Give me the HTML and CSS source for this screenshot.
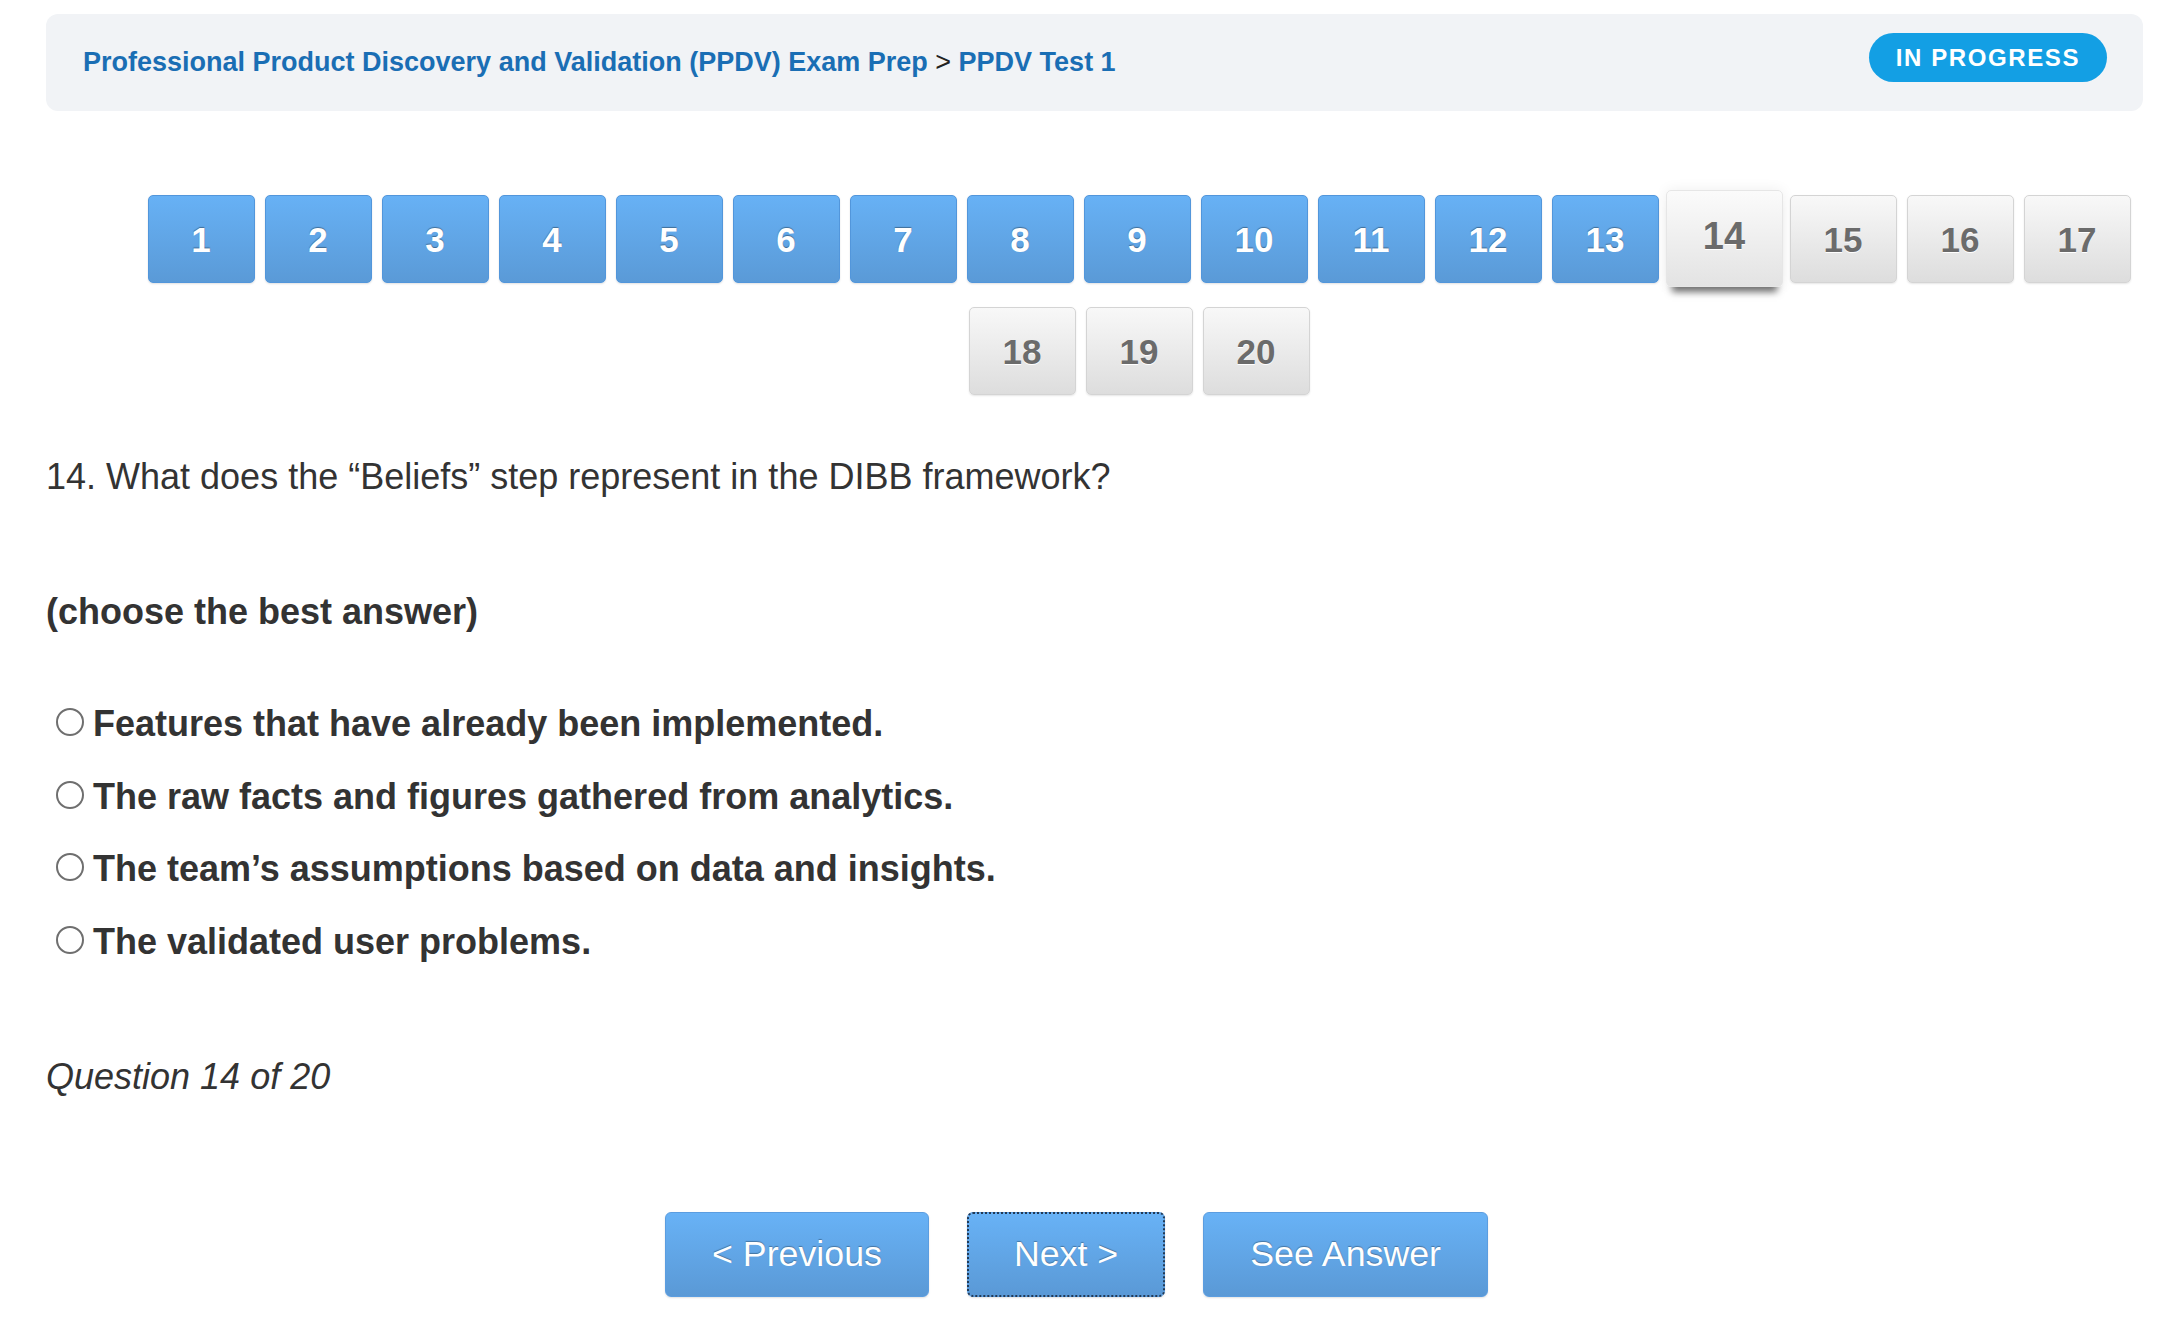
FILE: index.html
```html
<!DOCTYPE html>
<html lang="en">
<head>
<meta charset="utf-8">
<title>PPDV Test 1</title>
<link rel="stylesheet" href="styles.css">
</head>
<body>
<div class="page">
  <header class="topbar">
    <nav class="crumbs"><a class="crumb" href="#">Professional Product Discovery and Validation (PPDV) Exam Prep</a> <span class="sep">&gt;</span> <a class="crumb" href="#">PPDV Test 1</a></nav>
    <span class="badge">IN PROGRESS</span>
  </header>

  <div class="pager">
    <button class="pg done">1</button>
    <button class="pg done">2</button>
    <button class="pg done">3</button>
    <button class="pg done">4</button>
    <button class="pg done">5</button>
    <button class="pg done">6</button>
    <button class="pg done">7</button>
    <button class="pg done">8</button>
    <button class="pg done">9</button>
    <button class="pg done">10</button>
    <button class="pg done">11</button>
    <button class="pg done">12</button>
    <button class="pg done">13</button>
    <button class="pg todo current">14</button>
    <button class="pg todo">15</button>
    <button class="pg todo">16</button>
    <button class="pg todo">17</button>
    <button class="pg todo">18</button>
    <button class="pg todo">19</button>
    <button class="pg todo">20</button>
  </div>

  <p class="question">14. What does the “Beliefs” step represent in the DIBB framework?</p>
  <p class="hint">(choose the best answer)</p>

  <div class="options">
    <label class="option"><span class="radio"></span><span class="opt-text">Features that have already been implemented.</span></label>
    <label class="option"><span class="radio"></span><span class="opt-text">The raw facts and figures gathered from analytics.</span></label>
    <label class="option"><span class="radio"></span><span class="opt-text">The team’s assumptions based on data and insights.</span></label>
    <label class="option"><span class="radio"></span><span class="opt-text">The validated user problems.</span></label>
  </div>

  <p class="counter">Question 14 of 20</p>

  <div class="actions">
    <button class="act">&lt; Previous</button>
    <button class="act focused">Next &gt;</button>
    <button class="act">See Answer</button>
  </div>
</div>
</body>
</html>
```

FILE: styles.css
```css
html, body {
  margin: 0;
  padding: 0;
  background: #ffffff;
}

body {
  font-family: "Liberation Sans", Arial, Helvetica, sans-serif;
  color: #333333;
}

.page {
  padding: 14px 14px 40px 46px;
}

/* Header */
.topbar {
  height: 97px;
  box-sizing: border-box;
  background: #f1f3f6;
  border-radius: 12px;
  display: flex;
  align-items: center;
  justify-content: space-between;
  padding: 0 36px 0 37px;
}

.crumbs {
  font-size: 27px;
  font-weight: bold;
  color: #222222;
  white-space: nowrap;
}

.crumb {
  color: #1a6eb4;
  text-decoration: none;
}

.sep {
  font-weight: normal;
  color: #222222;
}

.badge {
  align-self: flex-start;
  margin-top: 19px;
  height: 49px;
  box-sizing: border-box;
  padding: 0 27px;
  display: flex;
  align-items: center;
  background: #139fe4;
  color: #ffffff;
  font-weight: bold;
  font-size: 24px;
  letter-spacing: 1.6px;
  border-radius: 25px;
}

/* Pager */
.pager {
  margin-top: 84px;
  padding-left: 89px;
  display: flex;
  flex-wrap: wrap;
  justify-content: center;
  gap: 24px 10px;
}

.pg {
  width: 107px;
  height: 88px;
  box-sizing: border-box;
  padding: 0;
  border-radius: 5px;
  font-family: "Liberation Sans", Arial, sans-serif;
  font-weight: bold;
  font-size: 35px;
  line-height: 1;
  cursor: pointer;
}

.pg.done {
  background: linear-gradient(#67b1f5, #5a9ad7);
  border: 1px solid #5296db;
  color: #ffffff;
  text-shadow: 0 -1px 1px rgba(0, 0, 0, 0.35);
  box-shadow: 0 1px 2px rgba(0, 0, 0, 0.12);
}

.pg.todo {
  background: linear-gradient(#f8f8f8, #dddddd);
  border: 1px solid #d4d4d4;
  color: #6b6b6b;
  text-shadow: 0 1px 0 #ffffff;
  box-shadow: 0 1px 2px rgba(0, 0, 0, 0.1);
}

.pg.current {
  width: 117px;
  height: 97px;
  margin: -5px -3px -4px;
  font-size: 38px;
  padding-bottom: 6px;
  background: linear-gradient(#fbfbfb, #e3e3e3);
  border-color: #e6e6e6;
  box-shadow: 0 0 14px rgba(0, 0, 0, 0.07), 0 11px 7px -6px rgba(0, 0, 0, 0.55);
}

/* Question */
.question {
  margin: 61px 0 0;
  font-size: 36px;
  color: #333333;
}

.hint {
  margin: 93px 0 0;
  font-size: 36px;
  font-weight: bold;
  color: #333333;
}

.options {
  margin-top: 70px;
  display: flex;
  flex-direction: column;
  gap: 30.5px;
}

.option {
  display: flex;
  align-items: center;
  font-size: 36px;
  font-weight: bold;
  color: #333333;
}

.radio {
  width: 28px;
  height: 28px;
  box-sizing: border-box;
  border: 2px solid #6f6f6f;
  border-radius: 50%;
  background: #ffffff;
  margin: 0 9px 0 10px;
  position: relative;
  top: -2px;
  flex: none;
}

.counter {
  margin: 93px 0 0;
  font-size: 36px;
  font-style: italic;
  color: #333333;
}

/* Actions */
.actions {
  margin-top: 114px;
  padding-right: 36px;
  display: flex;
  justify-content: center;
  gap: 38px;
}

.act {
  height: 85px;
  padding: 0 46px;
  box-sizing: border-box;
  background: linear-gradient(#68b2f6, #5a99d6);
  border: 1px solid #5b9de0;
  border-radius: 6px;
  color: #ffffff;
  font-family: "Liberation Sans", Arial, sans-serif;
  font-size: 35.75px;
  text-shadow: 0 -1px 1px rgba(0, 0, 0, 0.3);
  box-shadow: 0 1px 2px rgba(0, 0, 0, 0.12);
  cursor: pointer;
}

.act.focused {
  outline: 2px dotted #223a56;
  outline-offset: -2px;
}
```
